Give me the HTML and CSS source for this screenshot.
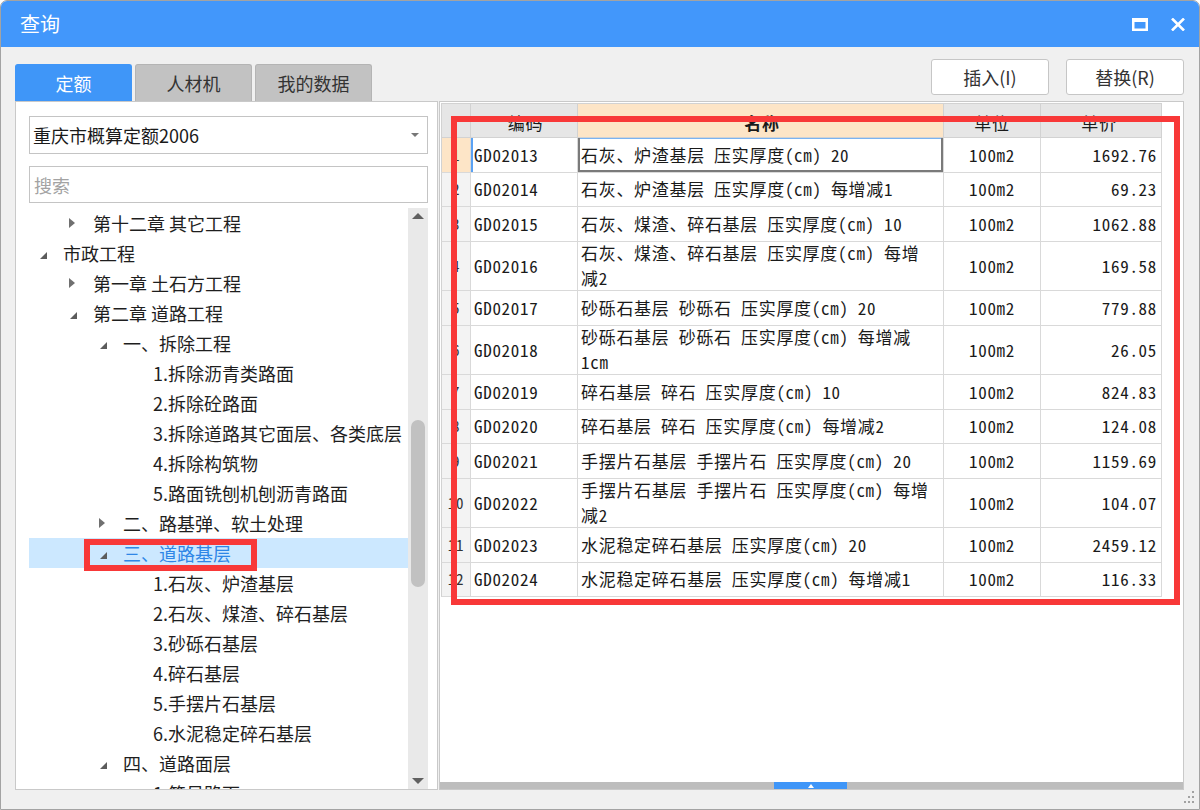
FILE: index.html
```html
<!DOCTYPE html>
<html lang="zh-CN">
<head>
<meta charset="utf-8">
<title>查询</title>
<link rel="stylesheet" href="styles.css">
</head>
<body>
<div class="window">
  <div class="titlebar">
    <span class="title">查询</span>
    <div class="win-btns">
      <svg width="16" height="13" viewBox="0 0 16 13"><rect x="1.25" y="1.5" width="13.5" height="10.25" fill="none" stroke="#fff" stroke-width="2.5"/><rect x="0" y="0" width="16" height="4" fill="#fff"/></svg>
      <svg width="16" height="13" viewBox="0 0 16 13"><path d="M2 0.5 L14 12.5 M14 0.5 L2 12.5" stroke="#fff" stroke-width="2.6"/></svg>
    </div>
  </div>

  <div class="toolbar">
    <div class="tabs">
      <div class="tab active">定额</div>
      <div class="tab">人材机</div>
      <div class="tab">我的数据</div>
    </div>
    <div class="actions">
      <button class="btn">插入(I)</button>
      <button class="btn">替换(R)</button>
    </div>
  </div>

  <div class="main">
    <div class="left">
      <div class="combo"><span>重庆市概算定额2006</span><span class="caret"></span></div>
      <input class="search" type="text" placeholder="搜索">
      <div class="tree">
        <div class="tree-list">
          <div class="node l1"><span class="tw c"></span><span class="lbl">第十二章 其它工程</span></div>
          <div class="node l0"><span class="tw e"></span><span class="lbl">市政工程</span></div>
          <div class="node l1"><span class="tw c"></span><span class="lbl">第一章 土石方工程</span></div>
          <div class="node l1"><span class="tw e"></span><span class="lbl">第二章 道路工程</span></div>
          <div class="node l2"><span class="tw e"></span><span class="lbl">一、拆除工程</span></div>
          <div class="node l3"><span class="tw"></span><span class="lbl">1.拆除沥青类路面</span></div>
          <div class="node l3"><span class="tw"></span><span class="lbl">2.拆除砼路面</span></div>
          <div class="node l3"><span class="tw"></span><span class="lbl">3.拆除道路其它面层、各类底层</span></div>
          <div class="node l3"><span class="tw"></span><span class="lbl">4.拆除构筑物</span></div>
          <div class="node l3"><span class="tw"></span><span class="lbl">5.路面铣刨机刨沥青路面</span></div>
          <div class="node l2"><span class="tw c"></span><span class="lbl">二、路基弹、软土处理</span></div>
          <div class="node l2 sel"><span class="mark"><span class="tw e"></span><span class="lbl">三、道路基层</span></span></div>
          <div class="node l3"><span class="tw"></span><span class="lbl">1.石灰、炉渣基层</span></div>
          <div class="node l3"><span class="tw"></span><span class="lbl">2.石灰、煤渣、碎石基层</span></div>
          <div class="node l3"><span class="tw"></span><span class="lbl">3.砂砾石基层</span></div>
          <div class="node l3"><span class="tw"></span><span class="lbl">4.碎石基层</span></div>
          <div class="node l3"><span class="tw"></span><span class="lbl">5.手摆片石基层</span></div>
          <div class="node l3"><span class="tw"></span><span class="lbl">6.水泥稳定碎石基层</span></div>
          <div class="node l2"><span class="tw e"></span><span class="lbl">四、道路面层</span></div>
          <div class="node l3"><span class="tw"></span><span class="lbl">1.简易路面</span></div>
        </div>
        <div class="vscroll">
          <span class="vs-up"></span>
          <span class="vs-thumb"></span>
          <span class="vs-down"></span>
        </div>
      </div>
    </div>

    <div class="right">
      <div class="grid-wrap">
        <div class="grid">
          <div class="row head">
            <div class="cell num"></div>
            <div class="cell code">编码</div>
            <div class="cell name hl">名称</div>
            <div class="cell unit">单位</div>
            <div class="cell price">单价</div>
          </div>
          <div class="row current">
            <div class="cell num">1</div>
            <div class="cell code">GD02013</div>
            <div class="cell name focus">石灰、炉渣基层 压实厚度(cm) 20</div>
            <div class="cell unit">100m2</div>
            <div class="cell price">1692.76</div>
          </div>
          <div class="row">
            <div class="cell num">2</div>
            <div class="cell code">GD02014</div>
            <div class="cell name">石灰、炉渣基层 压实厚度(cm) 每增减1</div>
            <div class="cell unit">100m2</div>
            <div class="cell price">69.23</div>
          </div>
          <div class="row">
            <div class="cell num">3</div>
            <div class="cell code">GD02015</div>
            <div class="cell name">石灰、煤渣、碎石基层 压实厚度(cm) 10</div>
            <div class="cell unit">100m2</div>
            <div class="cell price">1062.88</div>
          </div>
          <div class="row tall">
            <div class="cell num">4</div>
            <div class="cell code">GD02016</div>
            <div class="cell name">石灰、煤渣、碎石基层 压实厚度(cm) 每增<br>减2</div>
            <div class="cell unit">100m2</div>
            <div class="cell price">169.58</div>
          </div>
          <div class="row">
            <div class="cell num">5</div>
            <div class="cell code">GD02017</div>
            <div class="cell name">砂砾石基层 砂砾石 压实厚度(cm) 20</div>
            <div class="cell unit">100m2</div>
            <div class="cell price">779.88</div>
          </div>
          <div class="row tall">
            <div class="cell num">6</div>
            <div class="cell code">GD02018</div>
            <div class="cell name">砂砾石基层 砂砾石 压实厚度(cm) 每增减<br>1cm</div>
            <div class="cell unit">100m2</div>
            <div class="cell price">26.05</div>
          </div>
          <div class="row">
            <div class="cell num">7</div>
            <div class="cell code">GD02019</div>
            <div class="cell name">碎石基层 碎石 压实厚度(cm) 10</div>
            <div class="cell unit">100m2</div>
            <div class="cell price">824.83</div>
          </div>
          <div class="row">
            <div class="cell num">8</div>
            <div class="cell code">GD02020</div>
            <div class="cell name">碎石基层 碎石 压实厚度(cm) 每增减2</div>
            <div class="cell unit">100m2</div>
            <div class="cell price">124.08</div>
          </div>
          <div class="row">
            <div class="cell num">9</div>
            <div class="cell code">GD02021</div>
            <div class="cell name">手摆片石基层 手摆片石 压实厚度(cm) 20</div>
            <div class="cell unit">100m2</div>
            <div class="cell price">1159.69</div>
          </div>
          <div class="row tall">
            <div class="cell num">10</div>
            <div class="cell code">GD02022</div>
            <div class="cell name">手摆片石基层 手摆片石 压实厚度(cm) 每增<br>减2</div>
            <div class="cell unit">100m2</div>
            <div class="cell price">104.07</div>
          </div>
          <div class="row">
            <div class="cell num">11</div>
            <div class="cell code">GD02023</div>
            <div class="cell name">水泥稳定碎石基层 压实厚度(cm) 20</div>
            <div class="cell unit">100m2</div>
            <div class="cell price">2459.12</div>
          </div>
          <div class="row">
            <div class="cell num">12</div>
            <div class="cell code">GD02024</div>
            <div class="cell name">水泥稳定碎石基层 压实厚度(cm) 每增减1</div>
            <div class="cell unit">100m2</div>
            <div class="cell price">116.33</div>
          </div>
        </div>
      </div>
      <div class="hscroll"><span class="hs-thumb"></span></div>
      <div class="annot"></div>
    </div>
  </div>

  <div class="footer">
    <svg class="grip" width="10" height="13" viewBox="0 0 10 13">
      <rect x="8" y="0" width="2" height="2" fill="#a2a2a2"/>
      <rect x="4" y="5" width="2" height="2" fill="#a2a2a2"/>
      <rect x="8" y="5" width="2" height="2" fill="#a2a2a2"/>
      <rect x="0" y="10" width="2" height="2" fill="#a2a2a2"/>
      <rect x="4" y="10" width="2" height="2" fill="#a2a2a2"/>
      <rect x="8" y="10" width="2" height="2" fill="#a2a2a2"/>
    </svg>
  </div>
</div>
</body>
</html>
```
FILE: styles.css
```css
* { box-sizing: border-box; }
html, body { margin: 0; padding: 0; }
body {
  width: 1200px;
  height: 810px;
  overflow: hidden;
  background: #fff;
  font-family: "Noto Sans CJK SC", "Microsoft YaHei", sans-serif;
  color: #1e1e1e;
}

.window {
  width: 1200px;
  height: 810px;
  border: 1px solid #a3a3a3;
  border-radius: 7px 7px 0 0;
  background: #f0f0f0;
  display: flex;
  flex-direction: column;
  overflow: hidden;
}

/* title bar */
.titlebar {
  height: 46px;
  flex: none;
  background: #4297fb;
  display: flex;
  align-items: center;
  padding: 0 13px 0 19px;
  color: #fff;
}
.title { font-size: 20px; line-height: 1; }
.win-btns { margin-left: auto; display: flex; align-items: center; gap: 22px; }
.win-btns svg { display: block; }

/* toolbar with tabs and buttons */
.toolbar {
  height: 54px;
  flex: none;
  display: flex;
  padding: 0 15px 0 14px;
}
.tabs { display: flex; align-items: flex-end; gap: 3px; }
.tab {
  width: 117px;
  height: 37px;
  display: flex;
  align-items: center;
  justify-content: center;
  font-size: 18px;
  color: #333;
  background: #c2c2c2;
  border: 1px solid #b4b4b4;
  border-bottom: none;
  border-radius: 3px 3px 0 0;
}
.tab.active { background: #3f96f8; border-color: #3f96f8; color: #fff; }
.actions { margin-left: auto; display: flex; gap: 17px; margin-top: 12px; }
.btn {
  width: 118px;
  height: 36px;
  background: #fff;
  border: 1px solid #c6c6c6;
  border-radius: 3px;
  font-family: inherit;
  font-size: 18px;
  color: #333;
  padding: 0;
}

/* main area */
.main {
  height: 689px;
  flex: none;
  display: flex;
  padding: 0 15px 0 14px;
}

.left {
  width: 423px;
  flex: none;
  background: #fff;
  border: 1px solid #c9c9c9;
  padding: 14px 9px 0 13px;
  display: flex;
  flex-direction: column;
  min-height: 0;
}
.combo {
  height: 38px;
  flex: none;
  border: 1px solid #c4c4c4;
  display: flex;
  align-items: center;
  justify-content: space-between;
  padding: 0 8px 0 3px;
  font-size: 18px;
  color: #1a1a1a;
}
.caret {
  width: 0;
  height: 0;
  border-top: 4px solid #777;
  border-left: 4px solid transparent;
  border-right: 4px solid transparent;
}
.search {
  height: 37px;
  flex: none;
  margin: 12px 0 0;
  border: 1px solid #c4c4c4;
  padding: 0 4px;
  font-family: inherit;
  font-size: 18px;
  color: #1a1a1a;
  background: #fff;
  outline: none;
}
.search::placeholder { color: #a3a3a3; }

.tree {
  margin-top: 5px;
  flex: 1;
  min-height: 0;
  display: flex;
  overflow: hidden;
}
.tree-list { flex: 1; overflow: hidden; }
.node {
  height: 30px;
  display: flex;
  align-items: center;
  font-size: 18px;
  color: #1e1e1e;
  white-space: nowrap;
}
.node.l0 { padding-left: 6px; }
.node.l1 { padding-left: 36px; }
.node.l2 { padding-left: 66px; }
.node.l3 { padding-left: 96px; }
.tw {
  width: 14px;
  height: 14px;
  margin-right: 14px;
  flex: none;
  display: flex;
  align-items: center;
  justify-content: center;
}
.tw.c::before {
  content: "";
  border-left: 6px solid #707070;
  border-top: 5px solid transparent;
  border-bottom: 5px solid transparent;
}
.tw.e::before {
  content: "";
  border-bottom: 7px solid #5c5c5c;
  border-left: 7px solid transparent;
  position: relative;
  left: 1px;
  top: 2px;
}
.node.sel { background: #cce8ff; color: #2f86e6; }
.mark {
  align-self: stretch;
  display: flex;
  align-items: center;
  position: relative;
}
.mark::after {
  content: "";
  position: absolute;
  left: -11px;
  right: -26px;
  top: 1px;
  bottom: -3px;
  border: 6px solid #f83838;
}

.vscroll {
  width: 20px;
  flex: none;
  background: #e9e9e9;
  display: flex;
  flex-direction: column;
  align-items: center;
}
.vs-up {
  margin-top: 5px;
  width: 0;
  height: 0;
  border-bottom: 6px solid #606060;
  border-left: 6px solid transparent;
  border-right: 6px solid transparent;
}
.vs-thumb {
  margin-top: 201px;
  width: 14px;
  height: 167px;
  border-radius: 7px;
  background: #c1c1c1;
}
.vs-down {
  margin-top: auto;
  margin-bottom: 5px;
  width: 0;
  height: 0;
  border-top: 6px solid #606060;
  border-left: 6px solid transparent;
  border-right: 6px solid transparent;
}

/* right grid panel */
.right {
  flex: 1;
  margin-left: 1px;
  background: #fff;
  border: 1px solid #c9c9c9;
  padding: 1px 0 0 1px;
  display: flex;
  flex-direction: column;
  position: relative;
  min-width: 0;
}
.grid-wrap { flex: 1; overflow: hidden; }
.grid {
  width: 721px;
  font-family: "Noto Sans Mono CJK SC", "Noto Sans CJK SC", monospace;
  font-size: 17px;
  letter-spacing: 0.7px;
  color: #1a1a1a;
}
.row {
  display: grid;
  grid-template-columns: 30px 107px 366px 97px 121px;
  height: 34.5px;
}
.row.head { height: 35px; }
.row.tall { height: 49.5px; }
.cell {
  border-right: 1px solid #d9d9d9;
  border-bottom: 1px solid #d9d9d9;
  display: flex;
  align-items: center;
  white-space: nowrap;
  line-height: 22px;
  overflow: hidden;
}
.row.head .cell {
  background: #e6e6e6;
  border-top: 1px solid #d2d2d2;
  border-right-color: #d2d2d2;
  border-bottom-color: #d2d2d2;
  justify-content: center;
  padding-top: 4px;
}
.row.head .cell.hl { background: #fde5c7; font-weight: bold; }
.cell.num {
  border-left: 1px solid #d2d2d2;
  background: #f3f3f3;
  justify-content: center;
  font-size: 15px;
  color: #333;
}
.row.current .cell.num { background: #fde5c7; }
.cell.code { padding-left: 3px; }
.cell.name { padding-left: 3px; }
.row.tall .cell.name { line-height: 24.5px; }
.cell.unit { justify-content: center; }
.cell.price { justify-content: flex-end; padding-right: 4px; }
.row.current .cell.code { box-shadow: inset 2px 0 #5aa2f4; }
.cell.focus {
  box-shadow: inset 2px 0 #7a7a7a, inset -2px 0 #7a7a7a, inset 0 -2px #7a7a7a, inset 0 1px #7ab3f2;
}

.hscroll {
  height: 7px;
  flex: none;
  margin-left: -1px;
  background: #bdbdbd;
  display: flex;
}
.hs-thumb {
  margin-left: 334px;
  width: 73px;
  height: 7px;
  background: #3f96f8;
  display: flex;
  align-items: center;
  justify-content: center;
}
.hs-thumb::before {
  content: "";
  border-bottom: 4px solid #fff;
  border-left: 3px solid transparent;
  border-right: 3px solid transparent;
}

.annot {
  position: absolute;
  left: 11px;
  top: 14px;
  width: 729px;
  height: 489px;
  border: 6px solid #f83838;
  pointer-events: none;
}

.footer {
  flex: 1;
  display: flex;
  justify-content: flex-end;
  align-items: flex-start;
  padding: 1px 5px 0 0;
}
.grip { display: block; }
```
